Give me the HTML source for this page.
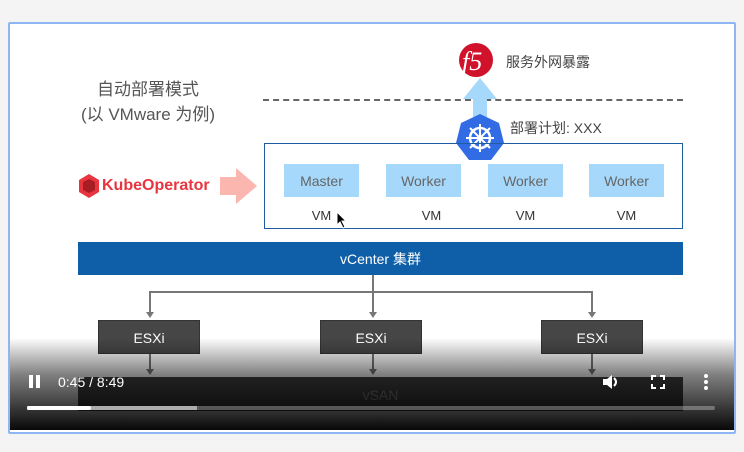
<!DOCTYPE html><html><head><meta charset="utf-8"><style>
body{margin:0;width:744px;height:452px;background:#f4f4f4;position:relative;overflow:hidden;font-family:"Liberation Sans","Noto Sans CJK SC",sans-serif}
.a{position:absolute}
.frame{left:8px;top:22px;width:724px;height:408px;border:2px solid #8fb6f3;background:#fff;border-radius:2px}
.t{color:#555;font-size:17px;text-align:center;width:200px;left:48px}
.wk{background:#a6d8fb;color:#666;font-size:14px;text-align:center;line-height:35px;width:75px;height:33px;top:164px}
.vm{font-size:13px;color:#333;top:208px;width:75px;text-align:center;line-height:15px}
.esx{background:#464646;color:#fff;font-size:14px;text-align:center;line-height:35px;width:102px;height:34px;top:320px;border:1px solid #333;box-sizing:border-box}
.ln{background:#777}
</style></head><body>
<div class="a frame"></div>
<div class="a t" style="top:75px">自动部署模式</div>
<div class="a t" style="top:100px">(以 VMware 为例)</div>
<div class="a" style="left:263px;top:99px;width:420px;border-top:2px dashed #666"></div>
<svg class="a" style="left:0;top:0" width="744" height="452">
<circle cx="476" cy="60" r="17" fill="#d0122b"/>
<text x="462" y="70" font-family="Liberation Serif,serif" font-size="26" fill="#fff" font-style="italic">f5</text>
<polygon points="480,78 497,99 487,99 487,120 473,120 473,99 463,99" fill="#a6d8fb"/>
<polygon points="480,114 499,123 504,143 491,160 469,160 456,143 461,123" fill="#326ce5"/>
<circle cx="480" cy="138" r="10" fill="none" stroke="#fff" stroke-width="2.5"/>
<g stroke="#fff" stroke-width="2"><line x1="480" y1="124" x2="480" y2="152"/><line x1="466" y1="138" x2="494" y2="138"/><line x1="470" y1="128" x2="490" y2="148"/><line x1="490" y1="128" x2="470" y2="148"/></g>
<polygon points="89,174 99,180 99,192 89,198 79,192 79,180" fill="#e8353f"/>
<polygon points="89,179 95,182 95,190 89,193 83,190 83,182" fill="#a81c24"/>
<polygon points="220,177 236,177 236,168 257,186 236,204 236,195 220,195" fill="#fbb6b0"/>
<g fill="#777"><polygon points="146,312 154,312 150,318"/><polygon points="369,312 377,312 373,318"/><polygon points="588,312 596,312 592,318"/>
<polygon points="146,369 154,369 150,375"/><polygon points="369,369 377,369 373,375"/><polygon points="588,369 596,369 592,375"/></g>
</svg>
<div class="a" style="left:506px;top:52px;font-size:14px;color:#444">服务外网暴露</div>
<div class="a" style="left:510px;top:118px;font-size:14px;color:#444">部署计划: XXX</div>
<div class="a" style="left:102px;top:177px;font-size:16px;font-weight:bold;color:#e8353f">KubeOperator</div>
<div class="a" style="left:264px;top:143px;width:417px;height:84px;border:1.5px solid #1d5ea0"></div>
<div class="a wk" style="left:284px">Master</div>
<div class="a wk" style="left:386px">Worker</div>
<div class="a wk" style="left:488px">Worker</div>
<div class="a wk" style="left:589px">Worker</div>
<div class="a vm" style="left:284px">VM</div>
<div class="a vm" style="left:394px">VM</div>
<div class="a vm" style="left:488px">VM</div>
<div class="a vm" style="left:589px">VM</div>
<svg class="a" style="left:336px;top:211px" width="12" height="18"><polygon points="1,1 1,14 4,11 7,17 9,16 6,10 10,10" fill="#000" stroke="#fff"/></svg>
<div class="a" style="left:78px;top:242px;width:605px;height:33px;background:#0f5fa8;color:#fff;font-size:14px;text-align:center;line-height:35px">vCenter 集群</div>
<div class="a ln" style="left:372px;top:275px;width:2px;height:17px"></div>
<div class="a ln" style="left:149px;top:291px;width:444px;height:2px"></div>
<div class="a ln" style="left:149px;top:291px;width:2px;height:24px"></div>
<div class="a ln" style="left:372px;top:291px;width:2px;height:24px"></div>
<div class="a ln" style="left:591px;top:291px;width:2px;height:24px"></div>
<div class="a esx" style="left:98px">ESXi</div>
<div class="a esx" style="left:320px">ESXi</div>
<div class="a esx" style="left:541px">ESXi</div>
<div class="a ln" style="left:149px;top:354px;width:2px;height:16px"></div>
<div class="a ln" style="left:372px;top:354px;width:2px;height:16px"></div>
<div class="a ln" style="left:591px;top:354px;width:2px;height:16px"></div>
<div class="a" style="left:78px;top:377px;width:605px;height:34px;background:#444;color:#888;font-size:14px;text-align:center;line-height:36px">vSAN</div>
<div class="a" style="left:10px;top:338px;width:724px;height:92px;background:linear-gradient(rgba(0,0,0,0),rgba(0,0,0,.5) 40%,rgba(0,0,0,.97))"></div>
<div class="a" style="left:29px;top:375px;width:4px;height:13px;background:#fff"></div>
<div class="a" style="left:36px;top:375px;width:4px;height:13px;background:#fff"></div>
<div class="a" style="left:58px;top:374px;color:#fff;font-size:14px">0:45 / 8:49</div>
<svg class="a" style="left:601px;top:373px" width="20" height="18"><polygon points="2,6 6,6 11,2 11,16 6,12 2,12" fill="#fff"/><path d="M13,5 Q17,9 13,13" stroke="#fff" stroke-width="2" fill="none"/></svg>
<svg class="a" style="left:651px;top:375px" width="14" height="14" fill="none" stroke="#fff" stroke-width="2"><path d="M1,5V1H5M9,1H13V5M13,9V13H9M5,13H1V9"/></svg>
<div class="a" style="left:704px;top:374px;width:4px;height:4px;background:#fff;border-radius:2px;box-shadow:0 6px #fff,0 12px #fff"></div>
<div class="a" style="left:27px;top:406px;width:688px;height:4px;background:rgba(255,255,255,.3);border-radius:2px"></div>
<div class="a" style="left:27px;top:406px;width:170px;height:4px;background:rgba(255,255,255,.5)"></div>
<div class="a" style="left:27px;top:406px;width:64px;height:4px;background:#fff;border-radius:2px"></div>
</body></html>
